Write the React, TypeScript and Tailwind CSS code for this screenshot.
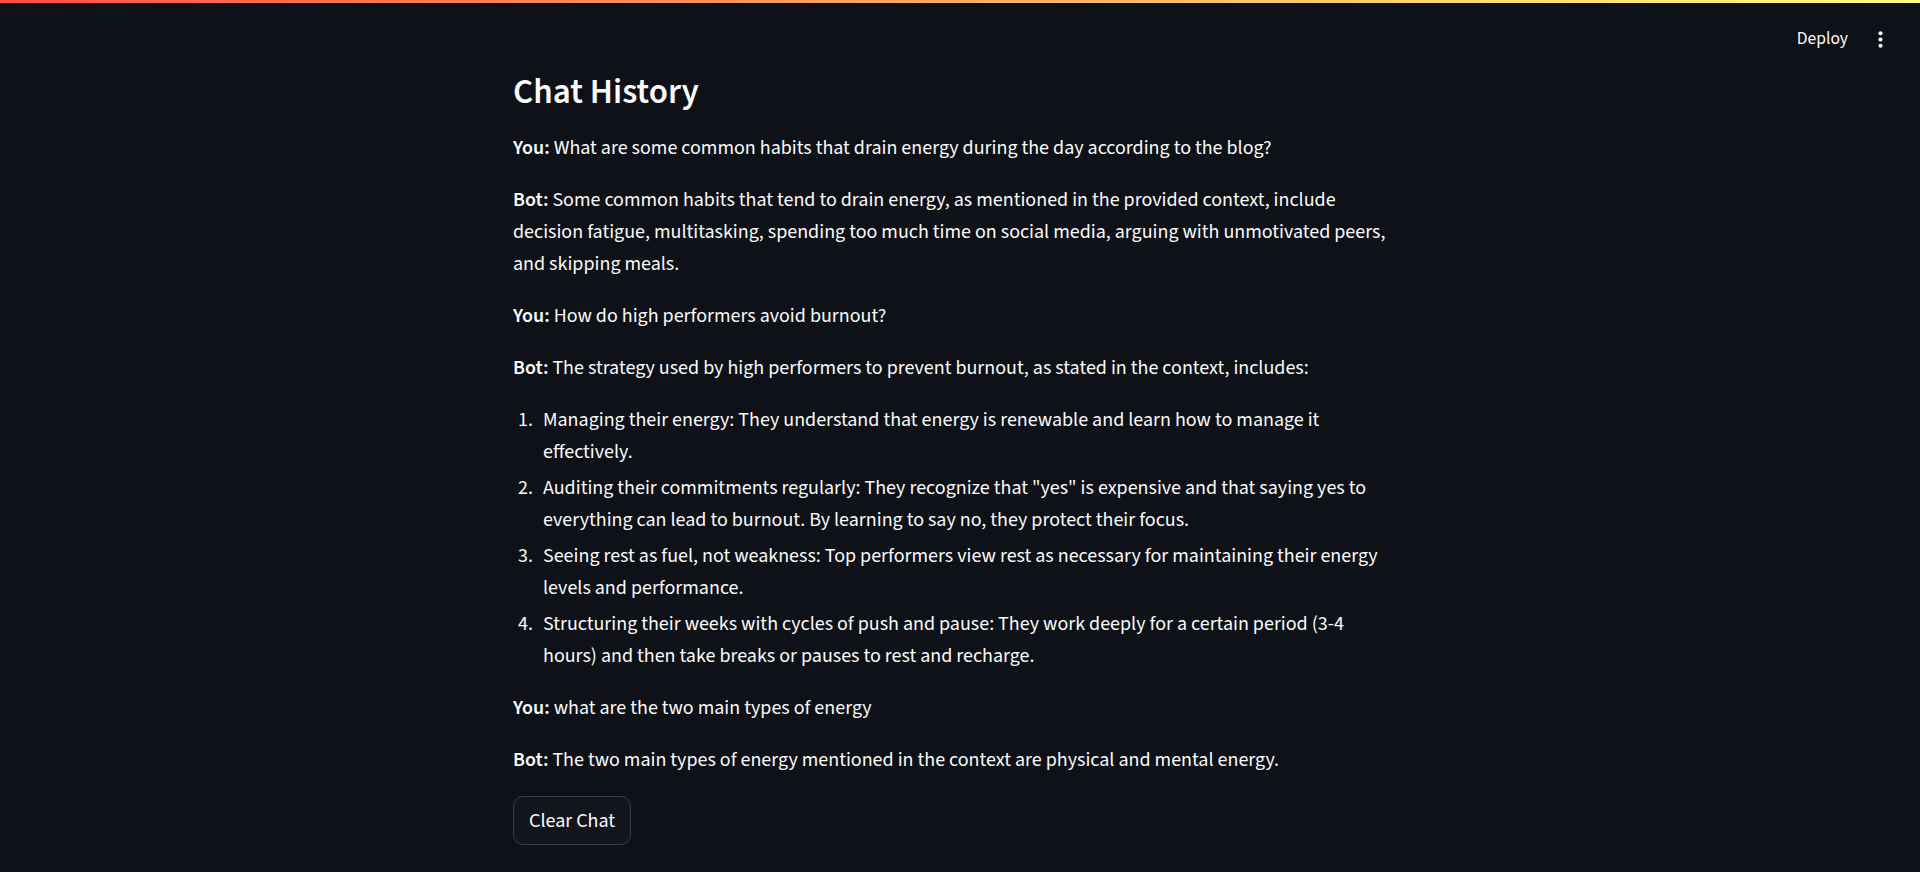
type Msg = { who: 'You' | 'Bot'; text: string; list?: string[] }

const history: Msg[] = [
  { who: 'You', text: 'What are some common habits that drain energy during the day according to the blog?' },
  {
    who: 'Bot',
    text: 'Some common habits that tend to drain energy, as mentioned in the provided context, include decision fatigue, multitasking, spending too much time on social media, arguing with unmotivated peers, and skipping meals.',
  },
  { who: 'You', text: 'How do high performers avoid burnout?' },
  {
    who: 'Bot',
    text: 'The strategy used by high performers to prevent burnout, as stated in the context, includes:',
    list: [
      'Managing their energy: They understand that energy is renewable and learn how to manage it effectively.',
      'Auditing their commitments regularly: They recognize that "yes" is expensive and that saying yes to everything can lead to burnout. By learning to say no, they protect their focus.',
      'Seeing rest as fuel, not weakness: Top performers view rest as necessary for maintaining their energy levels and performance.',
      'Structuring their weeks with cycles of push and pause: They work deeply for a certain period (3-4 hours) and then take breaks or pauses to rest and recharge.',
    ],
  },
  { who: 'You', text: 'what are the two main types of energy' },
  { who: 'Bot', text: 'The two main types of energy mentioned in the context are physical and mental energy.' },
]

function MoreIcon() {
  return (
    <svg width="25" height="25" viewBox="0 0 24 24" fill="currentColor">
      <circle cx="12" cy="6" r="2" />
      <circle cx="12" cy="12" r="2" />
      <circle cx="12" cy="18" r="2" />
    </svg>
  )
}

export default function App() {
  return (
    <div className="relative min-h-screen bg-[#0e1117] font-['Source_Sans_3','Lato',sans-serif] text-[#fafafa]">
      <div className="h-[3px] bg-linear-to-r from-[#ff4b4b] to-[#fffd80]" />

      {/* header overlay */}
      <div className="absolute top-[3px] right-[27px] flex h-[72px] items-center gap-[20px]">
        <button className="text-[17.5px] leading-none">Deploy</button>
        <MoreIcon />
      </div>

      <div className="flex justify-center pr-[14px]">
        <main className="w-[880px] pt-[68px] pb-10">
          <h3 className="mb-[19px] text-[35px] leading-[42px] font-semibold">Chat History</h3>

          {history.map((m, i) => (
            <div key={i}>
              <p className="mb-[20px] text-[20px] leading-[32px]">
                <span className="font-semibold">{m.who}:</span> {m.text}
              </p>
              {m.list && (
                <ol className="mb-[20px] flex flex-col gap-[4px]">
                  {m.list.map((item, j) => (
                    <li key={j} className="flex text-[20px] leading-[32px]">
                      <span className="w-[30px] shrink-0 pl-[5px]">{j + 1}.</span>
                      <span>{item}</span>
                    </li>
                  ))}
                </ol>
              )}
            </div>
          ))}

          <button className="h-[49px] rounded-[10px] border border-[#3b3e46] bg-[#12151c] px-[15px] text-[20px]">
            Clear Chat
          </button>
        </main>
      </div>
    </div>
  )
}
